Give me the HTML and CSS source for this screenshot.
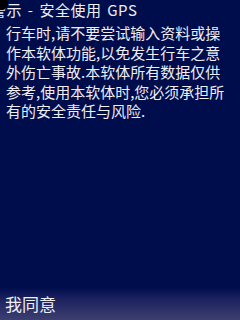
FILE: index.html
```html
<!DOCTYPE html>
<html lang="zh">
<head>
<meta charset="utf-8">
<link rel="stylesheet" href="styles.css">
</head>
<body>
<div class="screen">
  <div class="title">警示 - 安全使用 GPS</div>
  <div class="dot"></div>
  <div class="content">行车时,请不要尝试输入资料或操作本软体功能,以免发生行车之意外伤亡事故.本软体所有数据仅供参考,使用本软体时,您必须承担所有的安全责任与风险.</div>
  <div class="softkeys"><span class="left">我同意</span></div>
</div>
</body>
</html>
```

FILE: styles.css
```css
html, body {
  margin: 0;
  padding: 0;
  background: #000d4c;
}
.screen {
  position: relative;
  width: 240px;
  height: 320px;
  overflow: hidden;
  display: flex;
  flex-direction: column;
  background: #000d4c;
  color: #eeeef4;
  font-family: "Noto Sans CJK SC", "Liberation Sans", sans-serif;
}
.title {
  height: 22px;
  line-height: 20px;
  font-size: 15px;
  letter-spacing: 0.5px;
  word-spacing: 2px;
  margin-left: -9px;
  white-space: nowrap;
}
.dot {
  position: absolute;
  left: -5px;
  top: -3px;
  width: 13px;
  height: 13px;
  border-radius: 50%;
  background: #000;
}
.content {
  flex: 1;
  padding: 1px 8px 0 6px;
  font-size: 15px;
  line-height: 19.5px;
  word-break: break-all;
}
.softkeys {
  height: 32px;
  background: linear-gradient(#000d4c 0%, #1c2260 35%, #3d3f70 100%);
  display: flex;
  align-items: center;
  padding-left: 5px;
}
.left {
  font-size: 17px;
  line-height: 20px;
}
```
